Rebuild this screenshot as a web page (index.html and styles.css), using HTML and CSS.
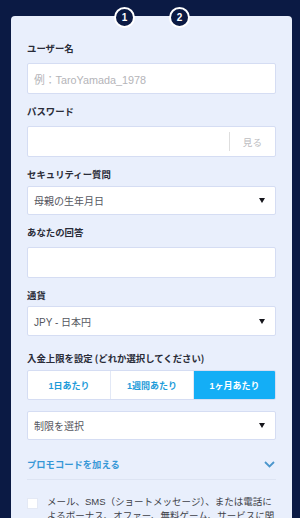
FILE: index.html
```html
<!DOCTYPE html>
<html lang="ja">
<head>
<meta charset="utf-8">
<link rel="stylesheet" href="styles.css">
</head>
<body>
<div class="page">
  <div class="card">
    <div class="steps">
      <span class="step">1</span>
      <span class="step">2</span>
    </div>

    <div class="field field--first">
      <div class="label">ユーザー名</div>
      <div class="box box--input"><span class="placeholder">例：TaroYamada_1978</span></div>
    </div>

    <div class="field">
      <div class="label">パスワード</div>
      <div class="box box--input box--pw">
        <span class="grow"></span>
        <span class="sep"></span>
        <span class="show">見る</span>
      </div>
    </div>

    <div class="field">
      <div class="label label--tight">セキュリティー質問</div>
      <div class="box box--select"><span class="value">母親の生年月日</span><span class="arrow"></span></div>
    </div>

    <div class="field">
      <div class="label">あなたの回答</div>
      <div class="box box--input"></div>
    </div>

    <div class="field">
      <div class="label label--tight2">通貨</div>
      <div class="box box--select box--tall"><span class="value">JPY - 日本円</span><span class="arrow"></span></div>
    </div>

    <div class="field field--limit">
      <div class="label label--tight">入金上限を設定 (どれか選択してください)</div>
      <div class="segments">
        <div class="seg">1日あたり</div>
        <div class="seg">1週間あたり</div>
        <div class="seg seg--active">1ヶ月あたり</div>
      </div>
      <div class="box box--select box--limit"><span class="value">制限を選択</span><span class="arrow"></span></div>
    </div>

    <div class="promo">
      <span class="promo-text">プロモコードを加える</span>
      <svg class="chev" width="11" height="7" viewBox="0 0 11 7"><path d="M1 1 L5.5 5.5 L10 1" fill="none" stroke="#4b96cc" stroke-width="1.8"/></svg>
    </div>

    <div class="consent">
      <span class="check"></span>
      <p class="consent-text">メール、SMS（ショートメッセージ）、または電話に<br>よるボーナス、オファー、無料ゲーム、サービスに関する情報を受け取ることに同意します。</p>
    </div>
  </div>
</div>
</body>
</html>
```

FILE: styles.css
```css
* { box-sizing: border-box; }
html, body { margin: 0; padding: 0; }
body {
  background: #0b1a44;
  font-family: "Liberation Sans", "Noto Sans CJK JP", sans-serif;
  width: 300px;
  height: 518px;
  overflow: hidden;
}
.page {
  padding: 16px 8px 0 11px;
}
.card {
  display: flow-root;
  background: #e9effc;
  border-radius: 4px 4px 0 0;
  padding: 0 16px 20px;
  min-height: 502px;
}
.steps {
  display: flex;
  justify-content: center;
  gap: 34px;
  margin-top: -9px;
  height: 21px;
  padding-left: 1px;
}
.step {
  width: 21px;
  height: 21px;
  border-radius: 50%;
  background: #0b1a44;
  border: 2px solid #ffffff;
  color: #ffffff;
  font-family: "Liberation Sans", sans-serif;
  font-weight: bold;
  font-size: 10px;
  display: flex;
  align-items: center;
  justify-content: center;
  line-height: 1;
}
.field { margin-top: 10px; }
.field--first { margin-top: 13px; }
.field--limit { margin-top: 15px; }
.label {
  font-family: "Noto Sans CJK JP", sans-serif;
  font-weight: bold;
  font-size: 9.4px;
  line-height: 14px;
  color: #2a2c38;
  margin-bottom: 8px;
  white-space: nowrap;
}
.label--tight { margin-bottom: 5px; }
.label--tight2 { margin-bottom: 4px; }
.box {
  background: #ffffff;
  border: 1px solid #d5ddf3;
  border-radius: 2px;
  display: flex;
  align-items: center;
  padding: 0 10px 0 6px;
}
.box--input { height: 31px; }
.box--select { height: 29px; }
.box--tall { height: 30px; }
.box--limit { margin-top: 11px; }
.placeholder {
  color: #b4b4b8;
  font-size: 10.8px;
}
.value {
  flex: 1;
  color: #55565e;
  font-size: 10px;
}
.arrow {
  width: 0;
  height: 0;
  border-left: 3.5px solid transparent;
  border-right: 3.5px solid transparent;
  border-top: 5px solid #16161c;
}
.box--pw { padding-right: 13px; }
.grow { flex: 1; }
.sep {
  width: 1px;
  height: 19px;
  background: #dedede;
  margin-right: 13px;
}
.show {
  color: #bcbcc0;
  font-size: 9.6px;
  font-family: "Noto Sans CJK JP", sans-serif;
}
.segments {
  display: grid;
  grid-template-columns: 83px 83px 1fr;
  height: 30px;
  background: #ffffff;
  border: 1px solid #d5ddf3;
  border-radius: 2px;
  overflow: hidden;
}
.seg {
  display: flex;
  align-items: center;
  justify-content: center;
  color: #1d9bd9;
  font-weight: bold;
  font-size: 9px;
  font-family: "Liberation Sans", "Noto Sans CJK JP", sans-serif;
  border-right: 1px solid #e2e8f6;
}
.seg:last-child { border-right: 0; }
.seg--active {
  background: #14aef6;
  color: #ffffff;
}
.promo {
  display: flex;
  align-items: center;
  justify-content: space-between;
  padding: 17px 1px 8px 0;
  border-bottom: 1px solid #dde4f3;
}
.promo-text {
  color: #3597d6;
  font-family: "Noto Sans CJK JP", sans-serif;
  font-weight: bold;
  font-size: 9.3px;
  line-height: 14px;
}
.chev { display: block; }
.consent {
  display: flex;
  align-items: flex-start;
  gap: 9px;
  margin-top: 15px;
}
.check {
  flex: none;
  width: 11px;
  height: 11px;
  background: #ffffff;
  border: 1px solid #e4e9f5;
  margin-top: 3px;
}
.consent-text {
  margin: 0;
  color: #3e3f48;
  font-size: 9.5px;
  line-height: 14px;
}
```
